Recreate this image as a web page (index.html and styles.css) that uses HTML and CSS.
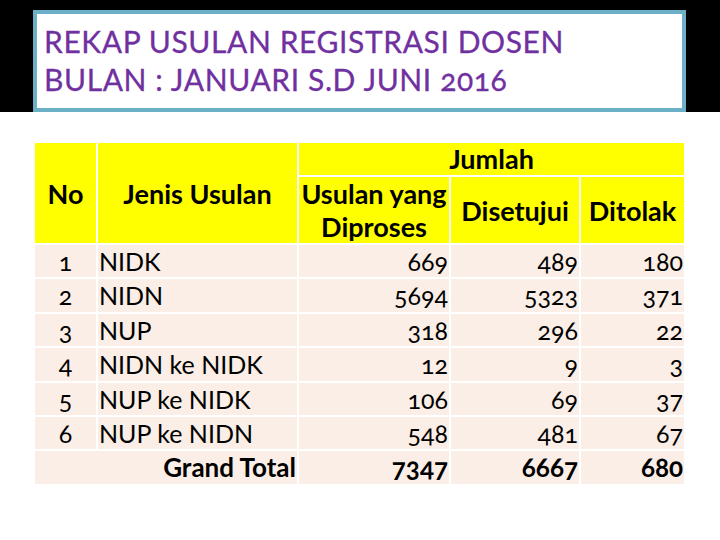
FILE: index.html
```html
<!DOCTYPE html>
<html>
<head>
<meta charset="utf-8">
<link rel="stylesheet" href="styles.css">
</head>
<body>
<header class="band">
  <div class="title-box">
    <h1 class="title">REKAP USULAN REGISTRASI DOSEN<br>BULAN : JANUARI S.D JUNI 2016</h1>
  </div>
</header>
<main class="content">
  <table class="rekap">
    <colgroup>
      <col class="c-no"><col class="c-jenis"><col class="c-num1"><col class="c-num2"><col class="c-num3">
    </colgroup>
    <thead>
      <tr class="h1">
        <th rowspan="2" class="th-center">No</th>
        <th rowspan="2" class="th-center">Jenis Usulan</th>
        <th colspan="3" class="th-center th-jumlah">Jumlah</th>
      </tr>
      <tr class="h2">
        <th class="th-center th-tight">Usulan yang<br>Diproses</th>
        <th class="th-center">Disetujui</th>
        <th class="th-center">Ditolak</th>
      </tr>
    </thead>
    <tbody>
      <tr><td class="no">1</td><td class="jenis">NIDK</td><td class="num">669</td><td class="num">489</td><td class="num">180</td></tr>
      <tr><td class="no">2</td><td class="jenis">NIDN</td><td class="num">5694</td><td class="num">5323</td><td class="num">371</td></tr>
      <tr><td class="no">3</td><td class="jenis">NUP</td><td class="num">318</td><td class="num">296</td><td class="num">22</td></tr>
      <tr><td class="no">4</td><td class="jenis">NIDN ke NIDK</td><td class="num">12</td><td class="num">9</td><td class="num">3</td></tr>
      <tr><td class="no">5</td><td class="jenis">NUP ke NIDK</td><td class="num">106</td><td class="num">69</td><td class="num">37</td></tr>
      <tr><td class="no">6</td><td class="jenis">NUP ke NIDN</td><td class="num">548</td><td class="num">481</td><td class="num">67</td></tr>
      <tr class="total"><td colspan="2" class="total-label">Grand Total</td><td class="num">7347</td><td class="num">6667</td><td class="num">680</td></tr>
    </tbody>
  </table>
</main>
</body>
</html>
```
FILE: styles.css
```css
html, body {
  margin: 0;
  padding: 0;
  background: #ffffff;
}
body {
  width: 720px;
  height: 540px;
  overflow: hidden;
  font-family: Lato, "Open Sans", "Liberation Sans", sans-serif;
}
.band {
  background: #000000;
  height: 112px;
  padding: 10px 34px 0 33px;
  box-sizing: border-box;
}
.title-box {
  background: #ffffff;
  border: 4px solid #6bb0c6;
  height: 102px;
  box-sizing: border-box;
  padding: 8px 0 0 7px;
}
.title {
  margin: 0;
  font-weight: 400;
  font-size: 30px;
  line-height: 38px;
  color: #7030a0;
  letter-spacing: 0.6px;
  -webkit-text-stroke: 0.3px #7030a0;
  font-variant-numeric: oldstyle-nums;
}
.content {
  padding: 31px 0 0 35px;
}
.rekap {
  border-collapse: collapse;
  table-layout: fixed;
  width: 650px;
  font-size: 25px;
  color: #000000;
  font-variant-numeric: oldstyle-nums;
}
.c-no { width: 62px; }
.c-jenis { width: 201px; }
.c-num1 { width: 152px; }
.c-num2 { width: 130px; }
.c-num3 { width: 105px; }
.rekap th, .rekap td {
  border: 2px solid #ffffff;
  padding: 0 1px;
  white-space: nowrap;
}
.rekap th {
  background: #ffff00;
  font-weight: 700;
  font-size: 27px;
}
.rekap tr:first-child th, .rekap tr:first-child td { border-top: 0; }
.rekap th:first-child, .rekap td:first-child { border-left: 0; }
.h1 { height: 33px; }
.h2 { height: 67px; }
.th-center { text-align: center; }
.th-jumlah { line-height: 28px; }
.th-tight { line-height: 33px; }
.rekap td {
  background: #fbeee6;
  height: 32.4px;
  line-height: 32.4px;
}
.no { text-align: center; }
.jenis { text-align: left; padding-left: 2px; }
.num { text-align: right; }
.total td { font-weight: 700; font-size: 26px; }
.total-label { text-align: right; }
```
